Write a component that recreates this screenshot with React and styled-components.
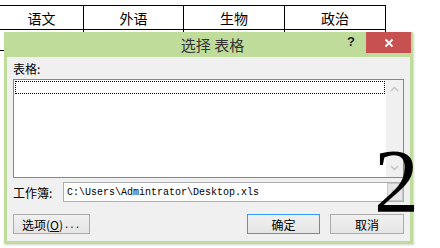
import React from "react";
import styled, { createGlobalStyle } from "styled-components";

const Global = createGlobalStyle`
  html, body { margin: 0; padding: 0; background: #fff; }
  body { width: 440px; height: 248px; overflow: hidden; position: relative;
    font-family: "Noto Sans CJK SC", "Noto Sans", sans-serif; }
`;

const Sheet = styled.table`
  border-collapse: collapse;
  margin: 5px 0 0 -1px;
  table-layout: fixed;
  font-family: "Noto Sans CJK SC", sans-serif;
  font-size: 14px;
  color: #000;
`;

const Cell = styled.td`
  border: 1px solid #000;
  width: ${(p) => p.$w}px;
  height: ${(p) => p.$h}px;
  padding: 0;
  text-align: center;
  line-height: 1;
`;

const Dialog = styled.div`
  position: absolute;
  left: 4px;
  top: 32px;
  width: 409px;
  height: 212px;
  box-sizing: border-box;
  background: #bfdc9b;
  border: 3px solid #bfdc9b;
  border-top: 0;
  display: flex;
  flex-direction: column;
  box-shadow: 1px 1px 2px rgba(0, 0, 0, 0.18);
`;

const TitleBar = styled.div`
  height: 25px;
  flex: none;
  position: relative;
  display: flex;
  align-items: center;
  justify-content: center;
  font-size: 15px;
  color: #333;
  padding-left: 8px;
`;

const Help = styled.span`
  position: absolute;
  right: 55px;
  top: 2px;
  font-family: "Liberation Sans", sans-serif;
  font-weight: bold;
  font-size: 13px;
  color: #222;
`;

const Close = styled.div`
  position: absolute;
  right: -1px;
  top: 0;
  width: 45px;
  height: 21px;
  background: #c75050;
  display: flex;
  align-items: center;
  justify-content: center;
`;

const Body = styled.div`
  flex: 1;
  background: #f0f0f0;
  padding: 4px 6px 0 6px;
  display: flex;
  flex-direction: column;
  font-size: 12px;
  color: #000;
`;

const Label = styled.div`
  height: 16px;
  line-height: 16px;
  margin-bottom: 2px;
`;

const ListBox = styled.div`
  height: 99px;
  box-sizing: border-box;
  border: 1px solid #828790;
  background: #fff;
  display: flex;
`;

const ListArea = styled.div`
  flex: 1;
  padding: 1px;
`;

const FocusRow = styled.div`
  height: 13px;
  box-sizing: border-box;
  border: 1px dotted #000;
`;

const ScrollBar = styled.div`
  width: 17px;
  background: #f0f0f0;
  display: flex;
  flex-direction: column;
  justify-content: space-between;
  align-items: center;
  padding: 6px 0 6px;
`;

const Row = styled.div`
  display: flex;
  align-items: center;
  margin-top: 4px;
  height: 20px;
`;

const RowLabel = styled.div`
  width: 50px;
  flex: none;
`;

const Input = styled.div`
  flex: 1;
  height: 20px;
  box-sizing: border-box;
  border: 1px solid #abadb3;
  background: #fff;
  display: flex;
  align-items: center;
  padding-left: 3px;
  font-family: "Liberation Mono", monospace;
  font-size: 10px;
`;

const InputText = styled.span`
  flex: 1;
`;

const DropBtn = styled.div`
  width: 16px;
  height: 18px;
  box-sizing: border-box;
  border: 1px solid #c8c8c8;
  background: #e6e6e6;
  display: flex;
  align-items: center;
  justify-content: center;
`;

const ButtonRow = styled.div`
  display: flex;
  align-items: center;
  margin-top: 12px;
`;

const Button = styled.div`
  width: ${(p) => p.$w}px;
  height: 20px;
  box-sizing: border-box;
  border: 1px solid ${(p) => (p.$primary ? "#3399ff" : "#acacac")};
  background: linear-gradient(#f0f0f0, #e5e5e5);
  display: flex;
  align-items: center;
  justify-content: ${(p) => (p.$left ? "flex-start" : "center")};
  padding-left: ${(p) => (p.$left ? "8px" : "0")};
  margin-left: ${(p) => p.$ml || 0}px;
  font-size: 12px;
`;

const Dots = styled.span`
  letter-spacing: 2px;
  font-family: "Liberation Sans", sans-serif;
  margin-left: 2px;
`;

const Big2 = styled.div`
  position: absolute;
  left: 374px;
  top: 137px;
  font-family: "Liberation Serif", serif;
  font-size: 90px;
  line-height: 90px;
  color: #000;
`;

const Chevron = ({ up }) => (
  <svg width="9" height="6" viewBox="0 0 9 6">
    <path
      d={up ? "M1 5 L4.5 1.5 L8 5" : "M1 1 L4.5 4.5 L8 1"}
      fill="none"
      stroke={up ? "#c2c2c2" : "#c2c2c2"}
      strokeWidth="1.4"
    />
  </svg>
);

export default function App() {
  return (
    <>
      <Global />
      <Sheet>
        <tbody>
          <tr>
            <Cell $w={83} $h={23}>语文</Cell>
            <Cell $w={99} $h={23}>外语</Cell>
            <Cell $w={100} $h={23}>生物</Cell>
            <Cell $w={100} $h={23}>政治</Cell>
          </tr>
          <tr>
            <Cell $w={83} $h={20}></Cell>
            <Cell $w={99} $h={20}></Cell>
            <Cell $w={100} $h={20}></Cell>
            <Cell $w={100} $h={20}></Cell>
          </tr>
        </tbody>
      </Sheet>
      <Dialog>
        <TitleBar>
          选择 表格
          <Help>?</Help>
          <Close>
            <svg width="10" height="10" viewBox="0 0 10 10">
              <path d="M1.5 1.5 L8.5 8.5 M8.5 1.5 L1.5 8.5" stroke="#fff" strokeWidth="1.8" />
            </svg>
          </Close>
        </TitleBar>
        <Body>
          <Label>表格:</Label>
          <ListBox>
            <ListArea>
              <FocusRow />
            </ListArea>
            <ScrollBar>
              <Chevron up />
              <Chevron />
            </ScrollBar>
          </ListBox>
          <Row>
            <RowLabel>工作簿:</RowLabel>
            <Input>
              <InputText>C:\Users\Admintrator\Desktop.xls</InputText>
              <DropBtn>
                <Chevron />
              </DropBtn>
            </Input>
          </Row>
          <ButtonRow>
            <Button $w={77} $left>
              选项(<u>O</u>)<Dots>...</Dots>
            </Button>
            <Button $w={73} $primary $ml={157}>确定</Button>
            <Button $w={74} $ml={10}>取消</Button>
          </ButtonRow>
        </Body>
      </Dialog>
      <Big2>2</Big2>
    </>
  );
}
